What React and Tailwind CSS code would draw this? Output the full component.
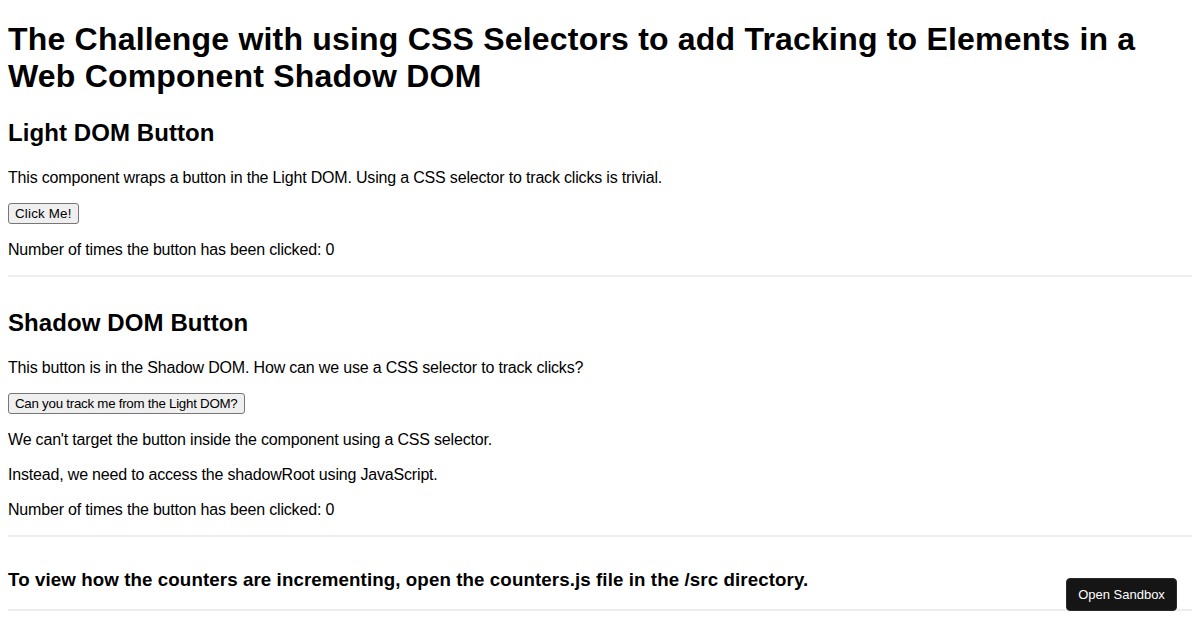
export default function App() {
  const p = 'my-4 text-base leading-[19px] tracking-[-0.18px]'
  const btn =
    'block rounded-[3px] border border-[#767676] bg-[#efefef] px-[6px] py-[2px] text-[13.33px] leading-[normal] text-black'
  return (
    <div className="min-h-screen bg-white px-2 text-black font-['Liberation_Sans',Arial,sans-serif]">
      <h1 className="mt-[21px] mb-[24px] text-[32px] font-bold leading-[normal] tracking-[0.2px]">
        The Challenge with using CSS Selectors to add Tracking to Elements in a Web Component Shadow DOM
      </h1>

      <section>
        <h2 className="mb-[21px] text-2xl font-bold leading-[normal] tracking-[0.08px]">Light DOM Button</h2>
        <p className={p}>This component wraps a button in the Light DOM. Using a CSS selector to track clicks is trivial.</p>
        <button className={`${btn} tracking-[0.2px]`}>Click Me!</button>
        <p className={p}>Number of times the button has been clicked: 0</p>
        <hr className="mt-[14px] mb-[32px] h-[2px] border-0 bg-[#eeeeee]" />
      </section>

      <section>
        <h2 className="mb-[21px] text-2xl font-bold leading-[normal] tracking-[0.1px]">Shadow DOM Button</h2>
        <p className={p}>This button is in the Shadow DOM. How can we use a CSS selector to track clicks?</p>
        <button className={`${btn} tracking-[-0.26px]`}>Can you track me from the Light DOM?</button>
        <p className={p}>We can't target the button inside the component using a CSS selector.</p>
        <p className={p}>Instead, we need to access the shadowRoot using JavaScript.</p>
        <p className={p}>Number of times the button has been clicked: 0</p>
        <hr className="mt-[15px] mb-[32px] h-[2px] border-0 bg-[#eeeeee]" />
      </section>

      <h3 className="mb-[18px] text-[18.72px] font-bold leading-[normal] tracking-[0.1px]">
        To view how the counters are incrementing, open the counters.js file in the /src directory.
      </h3>
      <hr className="h-[2px] border-0 bg-[#eeeeee]" />

      <button className="fixed right-[23px] bottom-[19px] h-[33px] w-[111px] rounded-[4px] border border-[#2a2a2a] bg-[#151515] text-[13px] text-white">
        Open Sandbox
      </button>
    </div>
  )
}
